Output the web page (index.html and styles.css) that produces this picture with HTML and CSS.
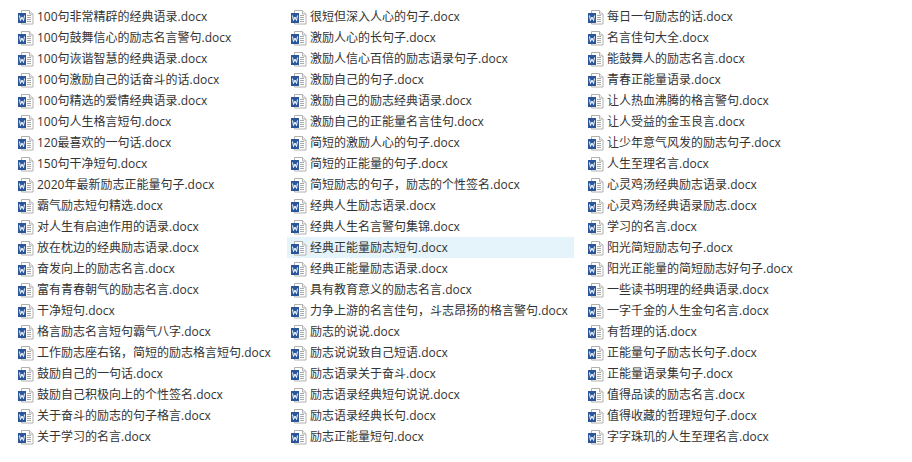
FILE: index.html
```html
<!DOCTYPE html>
<html lang="zh-CN">
<head>
  <meta charset="UTF-8">
  <title>励志名言文件列表</title>
  <link rel="stylesheet" href="styles.css">
</head>
<body>
  <!-- shared Word file icon -->
  <svg class="icon-defs" width="0" height="0">
    <symbol id="docx" viewBox="0 0 16 16">
      <path d="M3.500 1.500h8l3.500 3.500v10h-11.500z" fill="#fff" stroke="#b0b0b0"/>
      <path d="M11.500 1.500v3.500h3.500" fill="#f2f2f2" stroke="#b0b0b0"/>
      <path d="M9 6.500h4M9 8.500h4M9 10.500h4M9 12.500h4" stroke="#a8a8a8" fill="none"/>
      <rect x="0" y="4" width="8" height="10" fill="#2b579a"/>
      <path d="M1.500 6.500l1 5 1.500-3.500 1.500 3.500 1-5" stroke="#fff" stroke-width="1" fill="none"/>
    </symbol>
  </svg>

  <ul class="file-list" id="files"></ul>

  <script>
    const FILES = [
      "100句非常精辟的经典语录", "100句鼓舞信心的励志名言警句", "100句诙谐智慧的经典语录",
      "100句激励自己的话奋斗的话", "100句精选的爱情经典语录", "100句人生格言短句",
      "120最喜欢的一句话", "150句干净短句", "2020年最新励志正能量句子",
      "霸气励志短句精选", "对人生有启迪作用的语录", "放在枕边的经典励志语录",
      "奋发向上的励志名言", "富有青春朝气的励志名言", "干净短句",
      "格言励志名言短句霸气八字", "工作励志座右铭，简短的励志格言短句", "鼓励自己的一句话",
      "鼓励自己积极向上的个性签名", "关于奋斗的励志的句子格言", "关于学习的名言",

      "很短但深入人心的句子", "激励人心的长句子", "激励人信心百倍的励志语录句子",
      "激励自己的句子", "激励自己的励志经典语录", "激励自己的正能量名言佳句",
      "简短的激励人心的句子", "简短的正能量的句子", "简短励志的句子，励志的个性签名",
      "经典人生励志语录", "经典人生名言警句集锦", "经典正能量励志短句",
      "经典正能量励志语录", "具有教育意义的励志名言", "力争上游的名言佳句，斗志昂扬的格言警句",
      "励志的说说", "励志说说致自己短语", "励志语录关于奋斗",
      "励志语录经典短句说说", "励志语录经典长句", "励志正能量短句",

      "每日一句励志的话", "名言佳句大全", "能鼓舞人的励志名言",
      "青春正能量语录", "让人热血沸腾的格言警句", "让人受益的金玉良言",
      "让少年意气风发的励志句子", "人生至理名言", "心灵鸡汤经典励志语录",
      "心灵鸡汤经典语录励志", "学习的名言", "阳光简短励志句子",
      "阳光正能量的简短励志好句子", "一些读书明理的经典语录", "一字千金的人生金句名言",
      "有哲理的话", "正能量句子励志长句子", "正能量语录集句子",
      "值得品读的励志名言", "值得收藏的哲理短句子", "字字珠玑的人生至理名言"
    ];
    const SELECTED = "经典正能量励志短句";

    const list = document.getElementById("files");
    list.innerHTML = FILES.map(function (name) {
      const cls = name === SELECTED ? "file selected" : "file";
      return '<li class="' + cls + '"><svg class="file-icon"><use href="#docx"/></svg>' +
        '<span class="file-name">' + name + '.docx</span></li>';
    }).join("");
  </script>
</body>
</html>
```

FILE: styles.css
```css
html, body {
  margin: 0;
  background-color: #fff;
}

body {
  font-family: "Open Sans", "Noto Sans CJK SC", sans-serif;
  font-size: 12px;
  color: #333;
  overflow: hidden;
}

.icon-defs {
  display: block;
}

.file-list {
  display: grid;
  grid-auto-flow: column;
  grid-template-rows: repeat(21, 21px);
  grid-template-columns: 263px 287px 287px;
  column-gap: 10px;
  margin: 0;
  padding: 6px 0 0 14px;
  list-style: none;
}

.file {
  display: flex;
  align-items: center;
  gap: 3px;
  padding-left: 4px;
  white-space: nowrap;
}

.file-icon {
  width: 16px;
  height: 16px;
  flex: none;
}

.file-name {
  padding-bottom: 2px;
}

.selected {
  background-color: #e5f3fb;
}
```
